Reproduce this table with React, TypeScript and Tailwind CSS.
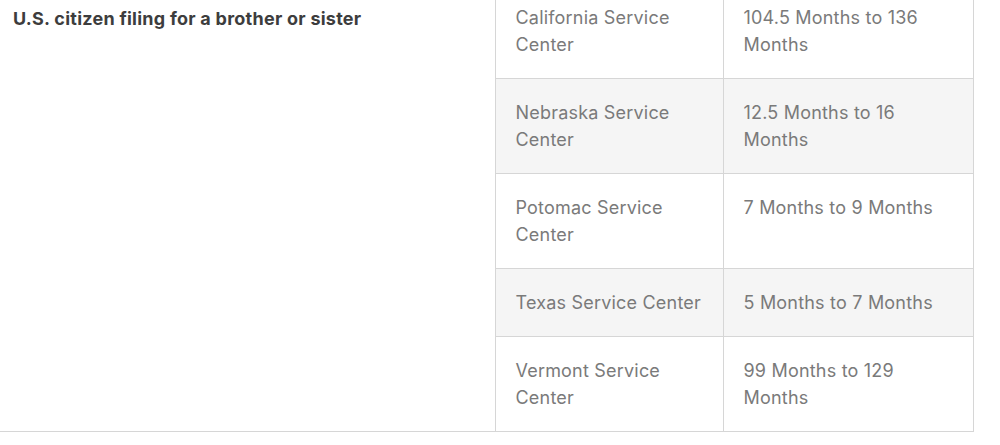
const ROWS = [
  { center: "California Service Center", time: "104.5 Months to 136 Months" },
  { center: "Nebraska Service Center", time: "12.5 Months to 16 Months" },
  { center: "Potomac Service Center", time: "7 Months to 9 Months" },
  { center: "Texas Service Center", time: "5 Months to 7 Months" },
  { center: "Vermont Service Center", time: "99 Months to 129 Months" },
]

export default function App() {
  return (
    <div className="w-[1000px] h-[445px] overflow-hidden bg-white">
      {/* page is scrolled a bit, first row starts above the viewport */}
      <table className="-mt-[17px] w-[973px] border-collapse table-fixed font-['Inter',sans-serif]">
        <colgroup>
          <col className="w-[495px]" />
          <col className="w-[228px]" />
          <col className="w-[250px]" />
        </colgroup>
        <tbody>
          {ROWS.map((row, i) => (
            <tr key={row.center} className={i % 2 === 1 ? "bg-[#f5f5f5]" : "bg-white"}>
              {i === 0 && (
                <td
                  rowSpan={ROWS.length}
                  className="align-top bg-white border-b border-r border-[#d6d6d6] pl-[13px] pt-[21px] font-bold text-[18px] leading-[27px] tracking-[0.25px] text-[#3d3d3d]"
                >
                  U.S. citizen filing for a brother or sister
                </td>
              )}
              <td className="align-top border border-[#d6d6d6] pl-5 pr-3 py-5 text-[18px] leading-[27px] tracking-[0.2px] text-[#7a7a7a]">
                {row.center}
              </td>
              <td className="align-top border border-[#d6d6d6] pl-5 pr-3 py-5 text-[18px] leading-[27px] tracking-[0.2px] text-[#7a7a7a]">
                {row.time}
              </td>
            </tr>
          ))}
        </tbody>
      </table>
    </div>
  )
}
